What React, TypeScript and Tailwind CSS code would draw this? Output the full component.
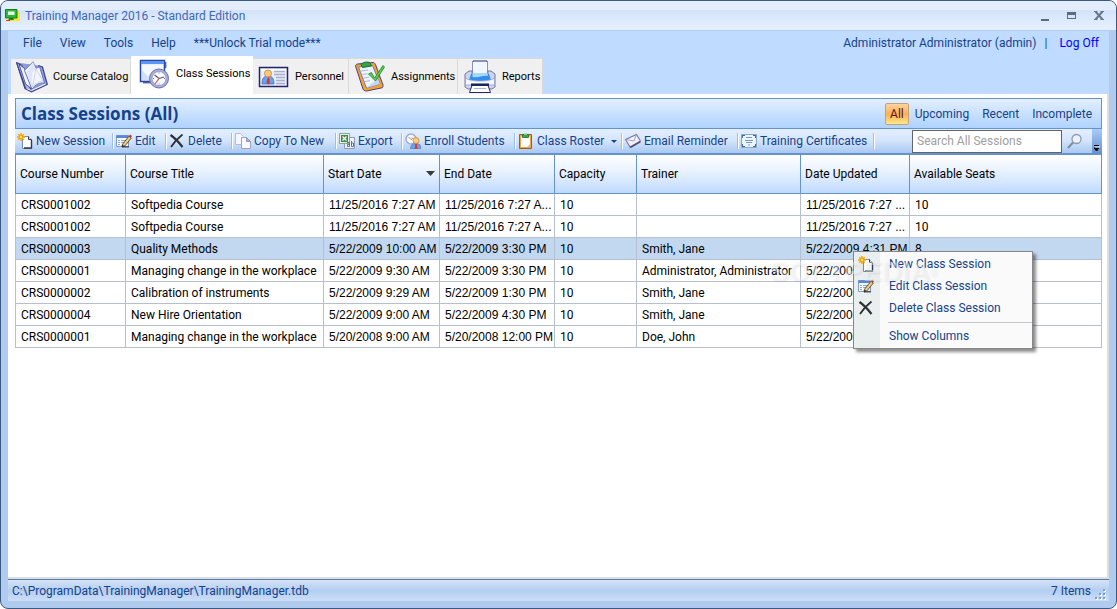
import { useState } from 'react'
import type { ReactNode } from 'react'
import clsx from 'clsx'

type Session = {
  number: string
  title: string
  start: string
  end: string
  capacity: string
  trainer: string
  updated: string
  seats: string
}

const sessions: Session[] = [
  { number: 'CRS0001002', title: 'Softpedia Course', start: '11/25/2016 7:27 AM', end: '11/25/2016 7:27 A...', capacity: '10', trainer: '', updated: '11/25/2016 7:27 ...', seats: '10' },
  { number: 'CRS0001002', title: 'Softpedia Course', start: '11/25/2016 7:27 AM', end: '11/25/2016 7:27 A...', capacity: '10', trainer: '', updated: '11/25/2016 7:27 ...', seats: '10' },
  { number: 'CRS0000003', title: 'Quality Methods', start: '5/22/2009 10:00 AM', end: '5/22/2009 3:30 PM', capacity: '10', trainer: 'Smith, Jane', updated: '5/22/2009 4:31 PM', seats: '8' },
  { number: 'CRS0000001', title: 'Managing change in the workplace', start: '5/22/2009 9:30 AM', end: '5/22/2009 3:30 PM', capacity: '10', trainer: 'Administrator, Administrator', updated: '5/22/2009', seats: '' },
  { number: 'CRS0000002', title: 'Calibration of instruments', start: '5/22/2009 9:29 AM', end: '5/22/2009 1:30 PM', capacity: '10', trainer: 'Smith, Jane', updated: '5/22/2009', seats: '' },
  { number: 'CRS0000004', title: 'New Hire Orientation', start: '5/22/2009 9:00 AM', end: '5/22/2009 4:30 PM', capacity: '10', trainer: 'Smith, Jane', updated: '5/22/2009', seats: '' },
  { number: 'CRS0000001', title: 'Managing change in the workplace', start: '5/20/2008 9:00 AM', end: '5/20/2008 12:00 PM', capacity: '10', trainer: 'Doe, John', updated: '5/22/2009', seats: '' },
]

const columns: { key: keyof Session; label: string; width: string; date?: boolean }[] = [
  { key: 'number', label: 'Course Number', width: 'w-[110px]' },
  { key: 'title', label: 'Course Title', width: 'w-[198px]' },
  { key: 'start', label: 'Start Date', width: 'w-[116px]', date: true },
  { key: 'end', label: 'End Date', width: 'w-[115px]', date: true },
  { key: 'capacity', label: 'Capacity', width: 'w-[82px]' },
  { key: 'trainer', label: 'Trainer', width: 'w-[164px]' },
  { key: 'updated', label: 'Date Updated', width: 'w-[109px]', date: true },
  { key: 'seats', label: 'Available Seats', width: '' },
]

/* ---------- small icons (16px) ---------- */

function NewIcon() {
  return (
    <svg width="16" height="16" viewBox="0 0 16 16" className="shrink-0">
      <path d="M5.5 3.5h6l3 3v9h-9z" fill="#fff" stroke="#7c8ba5" />
      <path d="M7 15h7.5V7" fill="none" stroke="#2c3950" strokeWidth="1.4" />
      <path d="M11.5 3.5v3h3" fill="#dbe4f2" stroke="#2c3950" />
      <path d="M4 0v8M0 4h8M1.2 1.2l5.6 5.6M6.8 1.2L1.2 6.8" stroke="#f5a90a" strokeWidth="1.5" />
      <circle cx="4" cy="4" r="1.9" fill="#ffe45c" stroke="#e88b00" strokeWidth=".8" />
    </svg>
  )
}

function EditIcon() {
  return (
    <svg width="16" height="16" viewBox="0 0 16 16" className="shrink-0">
      <path d="M.5 2.5h12v11H.5z" fill="#f4f8ff" stroke="#7d9acb" />
      <path d="M.5 2.5h12V5H.5z" fill="#5b86d8" />
      <path d="M2 7.5h2M5 7.5h4M2 9.5h2M5 9.5h3M2 11.5h2" stroke="#8ea8d3" />
      <path d="M6 13.7h7" stroke="#46506a" strokeWidth="1.5" />
      <path d="M6.5 11.3L13 3.200l2.300 1.800L9 12.800 6 14z" fill="#f1cf7a" stroke="#4e4230" strokeWidth=".9" />
      <path d="M12.800 3.200L14 1.500l2 1.500-1.200 1.900z" fill="#b5402c" />
      <path d="M6 14l.4-2.300 2 1.400z" fill="#222" />
    </svg>
  )
}

function DeleteIcon() {
  return (
    <svg width="16" height="16" viewBox="0 0 16 16" className="shrink-0">
      <path d="M1.500 2C6 5 10 9.500 13.500 14" fill="none" stroke="#2e3236" strokeWidth="2.200" />
      <path d="M13.500 1.500C9 5 5 9.500 2 14" fill="none" stroke="#2e3236" strokeWidth="1.800" />
    </svg>
  )
}

function CopyIcon() {
  return (
    <svg width="16" height="16" viewBox="0 0 16 16" className="shrink-0">
      <path d="M.5.500h5l3 3v8h-8z" fill="#f6f7fc" stroke="#b4bcd8" />
      <path d="M6.500 4.500h5l4 4v7h-9z" fill="#f8f8fd" stroke="#98a2c6" />
      <path d="M11.500 4.500v4h4z" fill="#a9b3d8" stroke="#8d98bd" />
    </svg>
  )
}

function ExportIcon() {
  return (
    <svg width="16" height="16" viewBox="0 0 16 16" className="shrink-0">
      <path d="M5.500 4.500h10v11h-10z" fill="#eef2f8" stroke="#8c9cb5" />
      <path d="M.5.500h10v10H.5z" fill="#e6f3e3" stroke="#8aa98c" />
      <path d="M2 2h7v7H2z" fill="#3f8752" />
      <path d="M3.500 3.500l4 4M7.500 3.500l-4 4" stroke="#fff" strokeWidth="1.300" />
      <path d="M8 9.500h2.500v4H8.500v-2h2M12.500 8v5.500h2V10h-2" fill="none" stroke="#56759c" />
    </svg>
  )
}

function EnrollIcon() {
  return (
    <svg width="16" height="16" viewBox="0 0 16 16" className="shrink-0">
      <circle cx="6" cy="6" r="5" fill="#f5f8fe" stroke="#9aaedb" strokeWidth="1.500" />
      <path d="M3.500 4L6 6.500 8 5" fill="none" stroke="#d07a55" />
      <path d="M5.500 16c0-4 2-5.500 5.500-5.500s5 1.500 5 5.500z" fill="#6fa0e6" stroke="#4772bd" strokeWidth=".6" />
      <path d="M10.300 10.500h1.500l.6 5.500H9.800z" fill="#e0352b" />
      <circle cx="11" cy="7.500" r="3" fill="#f8cf7c" stroke="#cb8a35" strokeWidth=".8" />
    </svg>
  )
}

function RosterIcon() {
  return (
    <svg width="16" height="16" viewBox="0 0 16 16" className="shrink-0">
      <path d="M1.500 1.500h12v14h-12z" fill="#f2a23a" stroke="#a85a16" />
      <path d="M3 3.500h9V14H3z" fill="#fdfdff" />
      <path d="M9 14l3-3v3z" fill="#b7c7e4" />
      <path d="M4.500 1.500h6v3h-6z" fill="#3fa34a" stroke="#23702e" strokeWidth=".8" />
      <path d="M6 .5h3v1.500H6z" fill="#7fd088" />
    </svg>
  )
}

function MailIcon() {
  return (
    <svg width="16" height="16" viewBox="0 0 16 16" className="shrink-0">
      <path d="M.6 6.500L11.500 1.500 15.400 8 5 14z" fill="#f2f1fc" stroke="#77749f" strokeWidth="1.100" />
      <path d="M.8 6.500L9 8l2.300-6.300" fill="none" stroke="#9a97c2" strokeWidth=".9" />
      <path d="M5 13.800L15.400 8l.2 1.400L5.500 15.200z" fill="#4f4c7d" />
    </svg>
  )
}

function CertificateIcon() {
  return (
    <svg width="16" height="16" viewBox="0 0 16 16" className="shrink-0">
      <path d="M.5 1.500h15v13H.5z" fill="#eaf5fd" stroke="#86a9cc" />
      <path d="M1 2h3v1H2v2H1zM12 2h3v3h-1V3h-2zM1 11h1v2h2v1H1zM14 11h1v3h-3v-1h2z" fill="#44688f" />
      <path d="M5 4.500h6M4 7.500h8M5 9.500h6M7 12h2" stroke="#7f97b4" />
    </svg>
  )
}

/* ---------- tab icons ---------- */

function CatalogIcon() {
  return (
    <svg width="32" height="32" viewBox="0 0 32 32" className="shrink-0">
      <path d="M.6 1.500L9 27.500l6.500 3.300 15.800-7.300L26.500 6 22 4.500" fill="#8f9bdb" stroke="#3a448f" strokeWidth="1.200" />
      <path d="M.6 1.500l5 2.500 9.500 25.500L9.500 27z" fill="#aab5e8" stroke="#2f3a86" strokeWidth=".9" />
      <path d="M3 3l5.500 4.500L16 28 9.500 23z" fill="#eef1fd" stroke="#2f3a86" strokeWidth=".8" />
      <path d="M8.500 9.500L17 .8l3 6.500 3.500-1.500L28.500 22c-5-.5-9 1.500-12.500 6z" fill="#fbfcff" stroke="#5f6ab4" strokeWidth=".9" />
      <path d="M17 1l2.800 6.500L16.500 12 16 27 10 11z" fill="#dfe5fa" />
      <path d="M20 7.500L27 20c-4 .5-7 2-10.500 6z" fill="#f2f5fe" stroke="#b7c1ea" strokeWidth=".7" />
      <path d="M10.500 27.500l5 2 14-6.500" fill="none" stroke="#fff" />
    </svg>
  )
}

function SessionsIcon() {
  return (
    <svg width="32" height="32" viewBox="0 0 32 32" className="shrink-0">
      <path d="M1.500 2.500h24v21h-24z" fill="#e6eefd" stroke="#2448a8" strokeWidth="1.500" />
      <path d="M26.800 4v6M4 24.800h10" stroke="#27306a" />
      <path d="M2 3h23v3H2z" fill="#5c97f2" />
      <path d="M3 7h21v15H3z" fill="#f4f8ff" />
      <path d="M3 22V12l9 10z" fill="#cfdef9" />
      <circle cx="20" cy="20.500" r="9.500" fill="#a9b0dd" stroke="#6a6fb0" />
      <circle cx="20" cy="20.500" r="7" fill="#fbfcff" stroke="#8b90c4" strokeWidth=".8" />
      <path d="M15.500 17l4.500 3.500 5-1.500" fill="none" stroke="#4a5170" strokeWidth="1.100" />
      <path d="M20 20.500L16 26" stroke="#ec4b40" strokeWidth="1.200" />
      <path d="M20 14.500v1M20 25.500v1M14 20.500h1M25 20.500h1" stroke="#666b94" />
    </svg>
  )
}

function PersonnelIcon() {
  return (
    <svg width="32" height="32" viewBox="0 0 32 32" className="shrink-0">
      <path d="M1.500 6.500h28v19h-28z" fill="#e9edf9" stroke="#20266c" strokeWidth="1.500" />
      <path d="M3 8h25v2H3z" fill="#fff" />
      <path d="M16 10.500h11M16 13.500h11M18 16.500h9M18 19.500h9M18 22.500h9" stroke="#a9b0cf" strokeWidth="1.300" />
      <path d="M4 23c0-6 2-8 6-8s6 2 6 8z" fill="#6ba0ea" stroke="#3868b8" strokeWidth=".7" />
      <path d="M8 15h4l-2 3z" fill="#fff" />
      <path d="M9.500 16H11l1 6-1.700 1.500L8.500 22z" fill="#d5382e" />
      <circle cx="10" cy="12.500" r="3.500" fill="#f7ca7b" stroke="#c88734" strokeWidth=".8" />
    </svg>
  )
}

function AssignmentsIcon() {
  return (
    <svg width="32" height="32" viewBox="0 0 32 32" className="shrink-0">
      <path d="M1.500 5c0-1 1-2 2-2L19 1.500c1 0 2 1 2.500 2L29 24c0 2 0 3-2 3l-14.500 3c-2 0-3-1-3.500-2z" fill="#f6a32c" stroke="#4a3f86" />
      <path d="M4.500 6l14-1.500L26 23l-13.500 4z" fill="#eef4fe" stroke="#5966b4" strokeWidth=".8" />
      <path d="M12.500 27L26 23l-2-5-7 5z" fill="#c3d4f7" />
      <path d="M7 10l7-1M8.500 13.500l5-.8M10 17l5-.8M11 20.500l5-.8" stroke="#a8b6e2" />
      <path d="M7 3.500c1-2 7-3.500 9-1.500l1.500 3-9 1.500z" fill="#36a54a" stroke="#1d6d2e" />
      <path d="M14.500 13l3-1.500 3 5.500L29 4.500l1.500 1.500L21.500 20z" fill="#58d552" stroke="#1c7a22" strokeWidth=".8" />
    </svg>
  )
}

function ReportsIcon() {
  return (
    <svg width="34" height="34" viewBox="0 0 34 34" className="shrink-0">
      <path d="M10 1h14v15H10z" fill="#f4f8ff" stroke="#23357d" />
      <path d="M2 14l4-3h3v3h16v-3h3l4 3v13l-3 2H5l-3-2z" fill="#cfd4ea" stroke="#7178a8" />
      <path d="M10 2h14v12H10z" fill="#f1f7ff" />
      <path d="M8 14h18l2 6c-7 2-15 2-22 0z" fill="#2f8fee" />
      <path d="M9.500 13h15l.5 3c-5-1-9 2-15.500 1z" fill="#a8d7fb" />
      <path d="M2.500 18c4 4 25 4 29 0v7h-29z" fill="#f5f6fc" stroke="#9aa1c8" strokeWidth=".8" />
      <path d="M8 23.500h18v3H8z" fill="#1c2150" />
      <path d="M9 25.500h16l2.500 7h-21z" fill="#fff" stroke="#232a63" />
      <path d="M11 28.500h12" stroke="#a9b2d6" />
    </svg>
  )
}

function AppIcon() {
  return (
    <svg width="16" height="14" viewBox="0 0 16 14" className="shrink-0">
      <path d="M3 2.500h12V12H3z" fill="#ffe423" />
      <path d="M.5.500h11.500v8.500H.5z" fill="#2cb83a" stroke="#14801f" />
      <path d="M3 2.500h6.500v3.500H3z" fill="#e8fbe8" />
      <path d="M4.500 9H8l1 2H3.500z" fill="#14801f" />
      <path d="M1 11.500h4" stroke="#e22b20" />
    </svg>
  )
}

const toolbar: { label: string; icon: ReactNode; width: string; caret?: boolean }[] = [
  { label: 'New Session', icon: <NewIcon />, width: 'w-[97px]' },
  { label: 'Edit', icon: <EditIcon />, width: 'w-[51px]' },
  { label: 'Delete', icon: <DeleteIcon />, width: 'w-[64px]' },
  { label: 'Copy To New', icon: <CopyIcon />, width: 'w-[102px]' },
  { label: 'Export', icon: <ExportIcon />, width: 'w-[64px]' },
  { label: 'Enroll Students', icon: <EnrollIcon />, width: 'w-[111px]' },
  { label: 'Class Roster', icon: <RosterIcon />, width: 'w-[105px]', caret: true },
  { label: 'Email Reminder', icon: <MailIcon />, width: 'w-[114px]' },
  { label: 'Training Certificates', icon: <CertificateIcon />, width: 'w-[134px]' },
]

const tabs: { label: string; icon: ReactNode; width: string }[] = [
  { label: 'Course Catalog', icon: <CatalogIcon />, width: 'w-[120px]' },
  { label: 'Class Sessions', icon: <SessionsIcon />, width: 'w-[122px]' },
  { label: 'Personnel', icon: <PersonnelIcon />, width: 'w-[96px]' },
  { label: 'Assignments', icon: <AssignmentsIcon />, width: 'w-[109px]' },
  { label: 'Reports', icon: <ReportsIcon />, width: 'w-[85px]' },
]

function TitleBar() {
  return (
    <header className="flex h-[30px] shrink-0 items-center border-b border-[#b0cdf3] bg-linear-to-b from-[#e3edfd] from-30% via-[#d3e3fa] via-30% to-[#e6f0fe] pr-3 pl-1">
      <AppIcon />
      <h1 className="ml-1 grow text-[#4068b8]">Training Manager 2016 - Standard Edition</h1>
      <div className="flex items-center gap-[18px]">
        <button aria-label="Minimize" className="flex h-3 w-2 items-end pb-[1px]">
          <span className="h-[2px] w-2 bg-[#5d6a80]" />
        </button>
        <button aria-label="Maximize" className="h-[7px] w-[9px] border border-t-[3px] border-[#5d6a80]" />
        <button aria-label="Close">
          <svg width="10" height="9" viewBox="0 0 10 9">
            <path d="M1.500.5l7 8M8.500.5l-7 8" stroke="#68758c" strokeWidth="2" />
            <path d="M0 .5h3.500M6.500.5H10M0 8.500h3.500M6.500 8.500H10" stroke="#68758c" />
          </svg>
        </button>
      </div>
    </header>
  )
}

function ContextMenu() {
  const item = 'flex h-[22px] w-full items-center gap-[15px] pl-1 text-left'
  return (
    <div className="absolute top-[220px] left-[845px] w-[180px] border border-[#868686] bg-[#fafafa] bg-linear-to-r from-[#e9eeee] from-[26px] to-[#fafafa] to-[26px] py-[1px] text-[#15428b] shadow-[3px_3px_3px_rgba(0,0,0,0.45)]">
      <button className={item}><NewIcon />New Class Session</button>
      <button className={item}><EditIcon />Edit Class Session</button>
      <button className={item}><DeleteIcon />Delete Class Session</button>
      <div className="mt-[3px] mb-[2px] ml-[34px] border-t border-[#c5c5c5]" />
      <button className="flex h-[22px] w-full items-center pl-[35px]">Show Columns</button>
    </div>
  )
}

export default function App() {
  const [active, setActive] = useState('Class Sessions')
  const [filter, setFilter] = useState('All')
  const [query, setQuery] = useState('')

  return (
    <div className="flex min-h-screen flex-col overflow-hidden rounded-lg border border-[#3b5a82] bg-[#b1cbef] font-['Roboto','Noto_Sans',sans-serif] text-[12px] leading-4 text-black">
      <TitleBar />
      <div className="relative mx-[7px] mb-[7px] flex grow flex-col bg-[#bfdbff]">
        <div className="flex h-6 items-center text-[#15428b]">
          <nav className="flex grow gap-[18px] pl-[15px]">
            <button>File</button>
            <button>View</button>
            <button>Tools</button>
            <button>Help</button>
            <button>***Unlock Trial mode***</button>
          </nav>
          <span>Administrator Administrator (admin)</span>
          <span className="mx-2">|</span>
          <a href="#logoff" className="mr-[10px] ml-1 text-[#0000ff]">Log Off</a>
        </div>

        <div role="tablist" className="flex items-end pt-[1px] pl-[3px] text-[11px]">
          {tabs.map(tab => (
            <button
              key={tab.label}
              role="tab"
              aria-selected={tab.label === active}
              onClick={() => setActive(tab.label)}
              className={clsx(
                'flex items-center gap-[5px] whitespace-nowrap',
                tab.width,
                tab.label === active ? 'h-[38px] bg-white pb-[3px] pl-2' : 'h-9 border-t border-r border-[#d9d9d9] bg-[#f0f0f0] pl-[5px]',
              )}
            >
              {tab.icon}
              {tab.label}
            </button>
          ))}
        </div>

        <main className="flex grow flex-col border-r-2 border-b-2 border-[#dedede] bg-white pt-1 pr-[5px] pl-[7px]">
          <div className="flex h-[31px] items-center border border-[#6593cf] bg-linear-to-b from-[#e3efff] to-[#afd2ff] pr-[3px] pl-[5px] text-[#15428b]">
            <h2 className="grow font-['Open_Sans','Noto_Sans',sans-serif] text-[17px] font-bold">Class Sessions (All)</h2>
            <div className="flex items-center">
              {['All', 'Upcoming', 'Recent', 'Incomplete'].map(name => (
                <button
                  key={name}
                  onClick={() => setFilter(name)}
                  className={clsx(
                    'h-[22px] rounded-[2px] border',
                    name === 'All' ? 'px-1' : name === 'Recent' ? 'px-[6px]' : 'px-[5px]',
                    name === filter
                      ? 'border-[#c2a27a] bg-linear-to-b from-[#fdd3a0] via-[#fcb04c] via-50% to-[#fee78c] text-[#5b1030]'
                      : 'border-transparent',
                  )}
                >
                  {name}
                </button>
              ))}
            </div>
          </div>

          <div className="flex h-[26px] items-center border-b-2 border-[#6593cf] bg-linear-to-b from-[#e3efff] via-[#d3e4fb] via-50% to-[#a9c8f3] text-[#15428b]">
            {toolbar.map(item => (
              <div key={item.label} className="flex shrink-0 items-center">
                <button className={clsx('flex items-center gap-[3px] pl-[2px] whitespace-nowrap', item.width)}>
                  {item.icon}
                  {item.label}
                  {item.caret && (
                    <svg width="6" height="3" viewBox="0 0 6 3" className="ml-1">
                      <path d="M0 0h6L3 3z" fill="#15428b" />
                    </svg>
                  )}
                </button>
                <span className="h-4 w-[2px] border-l border-[#9abfee] bg-white" />
              </div>
            ))}
            <span className="grow" />
            <input
              aria-label="Search All Sessions"
              placeholder="Search All Sessions"
              value={query}
              onChange={e => setQuery(e.target.value)}
              className="h-[23px] w-[150px] border border-[#646464] bg-white px-1 outline-none placeholder:text-[#a0a0a0]"
            />
            <button aria-label="Search" className="mx-[5px]">
              <svg width="16" height="16" viewBox="0 0 16 16">
                <circle cx="9.500" cy="6" r="4.500" fill="#eaf3fd" stroke="#8d9bb0" strokeWidth="1.300" />
                <path d="M6 9.500L1 15" stroke="#7f8ca0" strokeWidth="2" />
              </svg>
            </button>
            <button aria-label="More commands" className="ml-1 flex h-full w-[10px] items-end justify-center bg-linear-to-b from-[#a9cbfa] to-[#6593cf] pb-[1px]">
              <svg width="6" height="7" viewBox="0 0 6 7">
                <path d="M0 .5h5M0 3h5L2.500 6z" fill="#000" stroke="#000" />
                <path d="M1 2h5" stroke="#fff" />
              </svg>
            </button>
          </div>

          <table className="w-full table-fixed border-collapse text-left">
            <thead>
              <tr>
                {columns.map(col => (
                  <th
                    key={col.key}
                    className={clsx('h-[38px] border border-t-0 border-[#6593cf] bg-linear-to-b from-white via-[#e4effe] to-[#bfdaff] px-1 font-normal', col.width)}
                  >
                    <span className="flex items-center justify-between">
                      {col.label}
                      {col.key === 'start' && (
                        <svg width="9" height="5" viewBox="0 0 9 5">
                          <path d="M0 0h9L4.500 5z" fill="#3a3a3a" />
                        </svg>
                      )}
                    </span>
                  </th>
                ))}
              </tr>
            </thead>
            <tbody>
              {sessions.map((row, i) => (
                <tr key={i} className={clsx('h-[22px]', i === 2 && 'bg-[#c1d8f0]')}>
                  {columns.map(col => (
                    <td
                      key={col.key}
                      className={clsx('border border-[#b5bfd0] pt-[2px] pl-[5px] whitespace-nowrap', col.date && "font-['Liberation_Sans',sans-serif]")}
                    >
                      {row[col.key]}
                    </td>
                  ))}
                </tr>
              ))}
            </tbody>
          </table>
        </main>

        <footer className="flex h-[22px] items-center border-t border-[#567db0] bg-linear-to-b from-[#d5e3f7] via-[#b4cef1] via-50% to-[#cbdef8] pl-1 text-[#15428b]">
          <span className="grow">C:\ProgramData\TrainingManager\TrainingManager.tdb</span>
          <span>7 Items</span>
          <svg width="12" height="12" viewBox="0 0 12 12" className="mr-[2px] ml-1 mt-2">
            <path d="M9 1h2v2H9zM5 5h2v2H5zM9 5h2v2H9zM1 9h2v2H1zM5 9h2v2H5zM9 9h2v2H9z" fill="#fff" />
            <path d="M8 0h2v2H8zM4 4h2v2H4zM8 4h2v2H8zM0 8h2v2H0zM4 8h2v2H4zM8 8h2v2H8z" fill="#7d9ed0" />
          </svg>
        </footer>

        <ContextMenu />
        <div className="pointer-events-none absolute top-[225px] left-[762px] font-['Liberation_Sans',sans-serif] text-[28px] leading-8 font-bold text-white/40 [text-shadow:1px_1px_2px_rgba(120,120,120,0.15)]">
          SOFTPEDIA<sup className="text-[10px]">®</sup>
        </div>
      </div>
    </div>
  )
}
